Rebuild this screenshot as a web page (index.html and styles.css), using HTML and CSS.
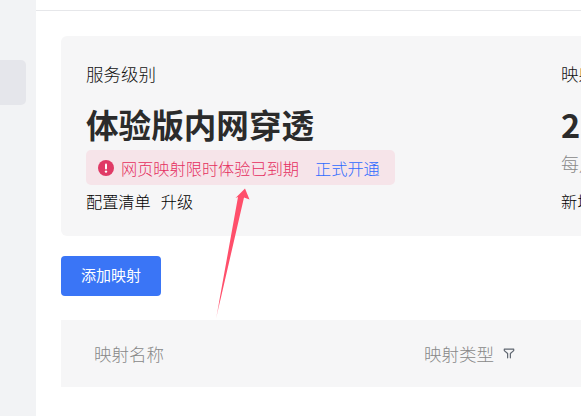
FILE: index.html
```html
<!DOCTYPE html>
<html lang="zh-CN">
<head>
    <meta charset="UTF-8">
    <meta name="viewport" content="width=device-width, initial-scale=1.0">
    <title>内网穿透</title>
    <link rel="stylesheet" href="styles.css">
</head>
<body>
    <div class="layout">
        <aside class="sidebar">
            <div class="side-item"></div>
        </aside>

        <main class="main">
            <div class="topbar"></div>

            <div class="content">
                <section class="summary">
                    <div class="summary-col plan">
                        <div class="col-label">服务级别</div>
                        <div class="col-value">体验版内网穿透</div>
                        <div class="notice">
                            <svg class="notice-icon" viewBox="0 0 16 16">
                                <circle cx="8" cy="8" r="8" fill="#e03a66"/>
                                <rect x="7" y="3.500" width="2" height="6" rx="1" fill="#fff"/>
                                <circle cx="8" cy="11.600" r="1.200" fill="#fff"/>
                            </svg>
                            <span class="notice-text">网页映射限时体验已到期</span>
                            <a class="notice-link">正式开通</a>
                        </div>
                        <div class="col-links">
                            <a>配置清单</a>
                            <a>升级</a>
                        </div>
                    </div>
                    <div class="summary-col quota">
                        <div class="col-label">映射数量</div>
                        <div class="col-value">2</div>
                        <div class="col-note">每月流量</div>
                        <div class="col-links">
                            <a>新增</a>
                        </div>
                    </div>
                </section>

                <button class="add-btn">添加映射</button>

                <div class="table-head">
                    <div class="th th-name">映射名称</div>
                    <div class="th th-type">
                        映射类型
                        <svg class="filter-icon" viewBox="0 0 14 14">
                            <path d="M1.500 2h11v1.600L8.600 7v5M5.400 12V7L1.500 3.600V2" fill="none" stroke="#5f6670" stroke-width="1.400" stroke-linejoin="round" stroke-linecap="round"/>
                        </svg>
                    </div>
                </div>
            </div>
        </main>
    </div>

    <!-- annotation arrow drawn over the screenshot -->
    <svg class="arrow" viewBox="0 0 581 416">
        <defs>
            <linearGradient id="arrow-fade" x1="0" y1="319" x2="0" y2="300" gradientUnits="userSpaceOnUse">
                <stop offset="0" stop-color="#ff4f6b" stop-opacity="0.3"/>
                <stop offset="1" stop-color="#ff4f6b"/>
            </linearGradient>
        </defs>
        <path d="M245 188.500L249.500 199.500L244 197.500L216 319L238 197L235.500 198Z" fill="url(#arrow-fade)"/>
    </svg>
</body>
</html>
```

FILE: styles.css
```css
html, body {
    margin: 0;
    height: 100%;
    overflow: hidden;
    background: #fff;
}

body {
    font-family: "Noto Sans CJK SC", "Noto Sans", sans-serif;
    color: #2b2b2b;
    position: relative;
}

.layout {
    display: flex;
    width: 100%;
    height: 416px;
}

.sidebar {
    flex: 0 0 36px;
    background: #f2f3f5;
    padding-top: 60px;
    box-sizing: border-box;
}

.side-item {
    width: 26px;
    height: 45px;
    background: #e5e6eb;
    border-radius: 0 5px 5px 0;
}

.main {
    flex: 1;
    min-width: 0;
}

.topbar {
    height: 10px;
    border-bottom: 1px solid #e6e7ea;
}

.content {
    padding: 25px 0 0 25px;
}

.summary {
    display: flex;
    width: 700px;
    height: 200px;
    box-sizing: border-box;
    padding: 24px 0 0 25px;
    background: #f6f6f7;
    border-radius: 6px;
}

.summary-col { flex: none; }
.plan { width: 475px; }

.col-label {
    font-size: 17.500px;
    font-weight: 300;
    color: #111;
    line-height: 28px;
}

.col-value {
    font-size: 32.600px;
    font-weight: 700;
    line-height: 46px;
    margin-top: 13px;
}

.notice {
    display: flex;
    align-items: center;
    width: 309px;
    height: 35px;
    margin-top: 3px;
    padding-left: 12px;
    box-sizing: border-box;
    background: #f6e4e9;
    border-radius: 5px;
    font-size: 16.200px;
    font-weight: 300;
}

.notice-icon {
    width: 16px;
    height: 16px;
    margin-right: 7px;
}

.notice-text { color: #e52f5f; }

.notice-link {
    color: #2f6bff;
    margin-left: 16px;
}

.col-note {
    font-size: 18px;
    font-weight: 300;
    color: #888;
    height: 35px;
    line-height: 27px;
    margin-top: 3px;
}

.col-links {
    display: flex;
    gap: 10px;
    margin-top: 3px;
    font-size: 16.200px;
    font-weight: 300;
    color: #000;
    line-height: 26px;
}

.add-btn {
    display: block;
    width: 100px;
    height: 40px;
    margin-top: 20px;
    padding: 0 0 3px;
    border: none;
    border-radius: 4px;
    background: #3a75f6;
    color: #fff;
    font-family: inherit;
    font-size: 15px;
}

.table-head {
    display: flex;
    align-items: center;
    width: 700px;
    height: 67px;
    margin-top: 24px;
    background: #f6f6f7;
    color: #888;
    font-size: 17.500px;
    font-weight: 300;
}

.th-name {
    width: 363px;
    padding-left: 33px;
    box-sizing: border-box;
}

.th-type {
    display: flex;
    align-items: center;
    gap: 9px;
}

.filter-icon {
    width: 12px;
    height: 13px;
}

.arrow {
    position: absolute;
    left: 0;
    top: 0;
    width: 581px;
    height: 416px;
    pointer-events: none;
}
```
